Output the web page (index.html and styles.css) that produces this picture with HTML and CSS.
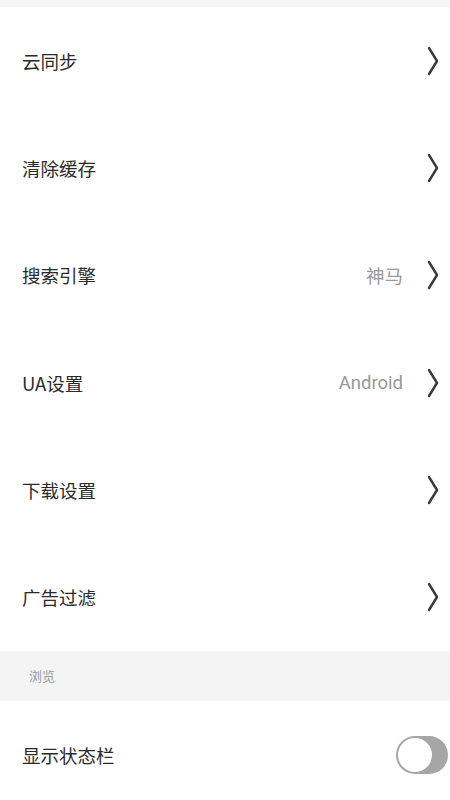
FILE: index.html
```html
<!DOCTYPE html>
<html lang="zh">
<head>
<meta charset="utf-8">
<link rel="stylesheet" href="styles.css">
</head>
<body>
<div class="page">
  <div class="topband"></div>
  <div class="row"><span class="label">云同步</span><span class="right"><svg class="chev" width="12" height="30" viewBox="0 0 12 30"><path d="M2 2 L10 15 L2 28" fill="none" stroke="#3a3a3a" stroke-width="2.4" stroke-linecap="round" stroke-linejoin="round"/></svg></span></div>
  <div class="row"><span class="label">清除缓存</span><span class="right"><svg class="chev" width="12" height="30" viewBox="0 0 12 30"><path d="M2 2 L10 15 L2 28" fill="none" stroke="#3a3a3a" stroke-width="2.4" stroke-linecap="round" stroke-linejoin="round"/></svg></span></div>
  <div class="row"><span class="label">搜索引擎</span><span class="right"><span class="value">神马</span><svg class="chev" width="12" height="30" viewBox="0 0 12 30"><path d="M2 2 L10 15 L2 28" fill="none" stroke="#3a3a3a" stroke-width="2.4" stroke-linecap="round" stroke-linejoin="round"/></svg></span></div>
  <div class="row"><span class="label">UA设置</span><span class="right"><span class="value">Android</span><svg class="chev" width="12" height="30" viewBox="0 0 12 30"><path d="M2 2 L10 15 L2 28" fill="none" stroke="#3a3a3a" stroke-width="2.4" stroke-linecap="round" stroke-linejoin="round"/></svg></span></div>
  <div class="row"><span class="label">下载设置</span><span class="right"><svg class="chev" width="12" height="30" viewBox="0 0 12 30"><path d="M2 2 L10 15 L2 28" fill="none" stroke="#3a3a3a" stroke-width="2.4" stroke-linecap="round" stroke-linejoin="round"/></svg></span></div>
  <div class="row"><span class="label">广告过滤</span><span class="right"><svg class="chev" width="12" height="30" viewBox="0 0 12 30"><path d="M2 2 L10 15 L2 28" fill="none" stroke="#3a3a3a" stroke-width="2.4" stroke-linecap="round" stroke-linejoin="round"/></svg></span></div>
  <div class="section">浏览</div>
  <div class="row"><span class="label">显示状态栏</span><span class="toggle"><span class="knob"></span></span></div>
</div>
</body>
</html>
```
FILE: styles.css
```css
html, body {
  margin: 0;
  padding: 0;
  background: #fff;
}
body {
  font-family: "Noto Sans CJK SC", "Noto Sans", sans-serif;
  width: 450px;
  height: 800px;
  overflow: hidden;
}
.topband {
  height: 7px;
  background: #f4f4f4;
}
.row {
  height: 107.33px;
  display: flex;
  align-items: center;
  justify-content: space-between;
  padding: 0 11px 0 22px;
  box-sizing: border-box;
}
.label {
  font-size: 18.5px;
  color: #2a2a2a;
}
.right {
  display: flex;
  align-items: center;
}
.value {
  font-size: 18.5px;
  color: #999;
  margin-right: 24px;
  font-family: Roboto, "Noto Sans CJK SC", sans-serif;
}
.chev {
  display: block;
}
.section {
  height: 50px;
  background: #f4f4f4;
  display: flex;
  align-items: center;
  padding-left: 29px;
  font-size: 13px;
  color: #999;
}
.toggle {
  width: 52px;
  height: 38px;
  border-radius: 19px;
  background: #a6a6a6;
  position: relative;
  margin-right: -9px;
}
.knob {
  position: absolute;
  left: 2px;
  top: 2px;
  width: 34px;
  height: 34px;
  border-radius: 50%;
  background: #fff;
}
```
